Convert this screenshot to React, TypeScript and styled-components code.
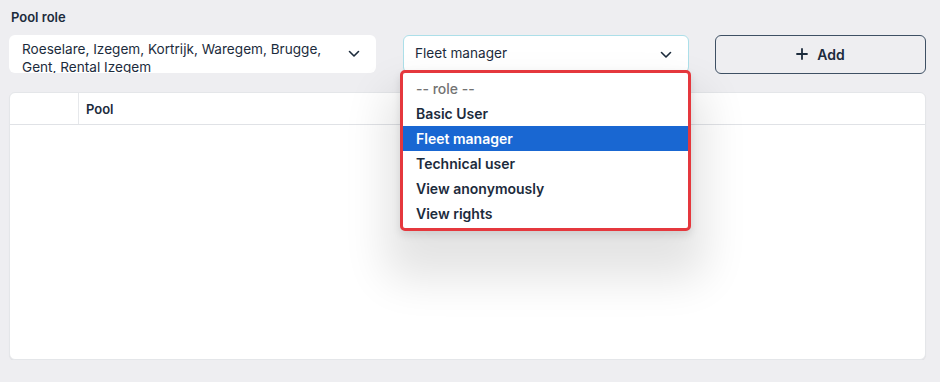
import React from 'react';
import styled, { createGlobalStyle } from 'styled-components';

const GlobalStyle = createGlobalStyle`
  body {
    margin: 0;
    background: #eeeef1;
    font-family: Inter, "Open Sans", sans-serif;
    color: #1c2b3c;
  }
`;

const Page = styled.div`
  width: 917px;
  padding: 9px 14px 0 9px;
`;

const Label = styled.div`
  font-size: 13px;
  font-weight: 600;
  line-height: 16px;
  padding-left: 2px;
  margin-bottom: 10px;
`;

const Row = styled.div`
  display: flex;
  height: 38px;
  margin-bottom: 19px;
`;

const Select = styled.div<{ $width: number; $focused?: boolean }>`
  position: relative;
  box-sizing: border-box;
  width: ${p => p.$width}px;
  height: 38px;
  background: #fff;
  border-radius: 6px;
  border: ${p => (p.$focused ? '1.5px solid #acdfe9' : 'none')};
  display: flex;
  align-items: flex-start;
  justify-content: space-between;
  padding: ${p => (p.$focused ? '8px 16px 0 11px' : '5px 16px 0 13px')};
  overflow: hidden;
  font-size: 13.6px;
  line-height: 18px;
`;

const SelectText = styled.div`
  width: 322px;
`;

const Chevron = styled.svg<{ $top: number }>`
  flex: none;
  margin-top: ${p => p.$top}px;
`;

const Spacer = styled.div<{ $w: number }>`
  width: ${p => p.$w}px;
  flex: none;
`;

const AddButton = styled.button`
  box-sizing: border-box;
  width: 211px;
  height: 39px;
  border: 1.5px solid #3e5064;
  border-radius: 6px;
  background: transparent;
  font-family: inherit;
  font-size: 14px;
  font-weight: 600;
  color: #1c2b3c;
  display: flex;
  align-items: center;
  justify-content: center;
  gap: 9px;
  padding-bottom: 2px;
`;

const Card = styled.div`
  box-sizing: border-box;
  height: 268px;
  background: #fff;
  border: 1px solid #e4e6e9;
  border-radius: 6px;
  box-shadow: 0 1px 1px rgba(0, 0, 0, 0.06);
`;

const HeaderRow = styled.div`
  display: grid;
  grid-template-columns: 69px 1fr;
  height: 31px;
  border-bottom: 1px solid #e0e2e6;
`;

const HeaderCell = styled.div<{ $first?: boolean }>`
  display: flex;
  align-items: center;
  padding-left: 7px;
  font-size: 13px;
  font-weight: 600;
  border-right: ${p => (p.$first ? '1px solid #e6e8eb' : 'none')};
`;

const Menu = styled.ul`
  position: absolute;
  left: -3px;
  top: 35px;
  width: 285px;
  margin: 0;
  padding: 3px 0 2px;
  list-style: none;
  background: #fff;
  border: 3px solid #e5383d;
  border-radius: 5px;
  box-shadow: 0 34px 44px 14px rgba(0, 0, 0, 0.11), 0 4px 8px rgba(0, 0, 0, 0.1);
  z-index: 5;
`;

const Option = styled.li<{ $active?: boolean; $placeholder?: boolean }>`
  height: 25px;
  line-height: 25px;
  padding-left: 13px;
  font-size: 14px;
  background: ${p => (p.$active ? '#1967d2' : 'transparent')};
  color: ${p => (p.$active ? '#fff' : p.$placeholder ? '#737373' : '#1c2b3c')};
  font-weight: ${p => (p.$placeholder ? 500 : 600)};
`;

const SelectWrap = styled.div`
  position: relative;
`;

const ChevronIcon = ({ top }: { top: number }) => (
  <Chevron $top={top} width="12" height="8" viewBox="0 0 12 8">
    <path d="M1.5 1.5 L6 6 L10.5 1.5" fill="none" stroke="#1c2b3c" strokeWidth="1.6" strokeLinecap="round" strokeLinejoin="round" />
  </Chevron>
);

const roles = ['Basic User', 'Fleet manager', 'Technical user', 'View anonymously', 'View rights'];

export default function App() {
  return (
    <Page>
      <GlobalStyle />
      <Label>Pool role</Label>
      <Row>
        <Select $width={367}>
          <SelectText>Roeselare, Izegem, Kortrijk, Waregem, Brugge, Gent, Rental Izegem</SelectText>
          <ChevronIcon top={10} />
        </Select>
        <Spacer $w={27} />
        <SelectWrap>
          <Select $width={286} $focused>
            <span>Fleet manager</span>
            <ChevronIcon top={7} />
          </Select>
          <Menu>
            <Option $placeholder>-- role --</Option>
            {roles.map(r => (
              <Option key={r} $active={r === 'Fleet manager'}>{r}</Option>
            ))}
          </Menu>
        </SelectWrap>
        <Spacer $w={26} />
        <AddButton>
          <svg width="12" height="12" viewBox="0 0 12 12">
            <path d="M6 1 V11 M1 6 H11" stroke="#1c2b3c" strokeWidth="1.8" strokeLinecap="round" />
          </svg>
          Add
        </AddButton>
      </Row>
      <Card>
        <HeaderRow>
          <HeaderCell $first />
          <HeaderCell>Pool</HeaderCell>
        </HeaderRow>
      </Card>
    </Page>
  );
}
